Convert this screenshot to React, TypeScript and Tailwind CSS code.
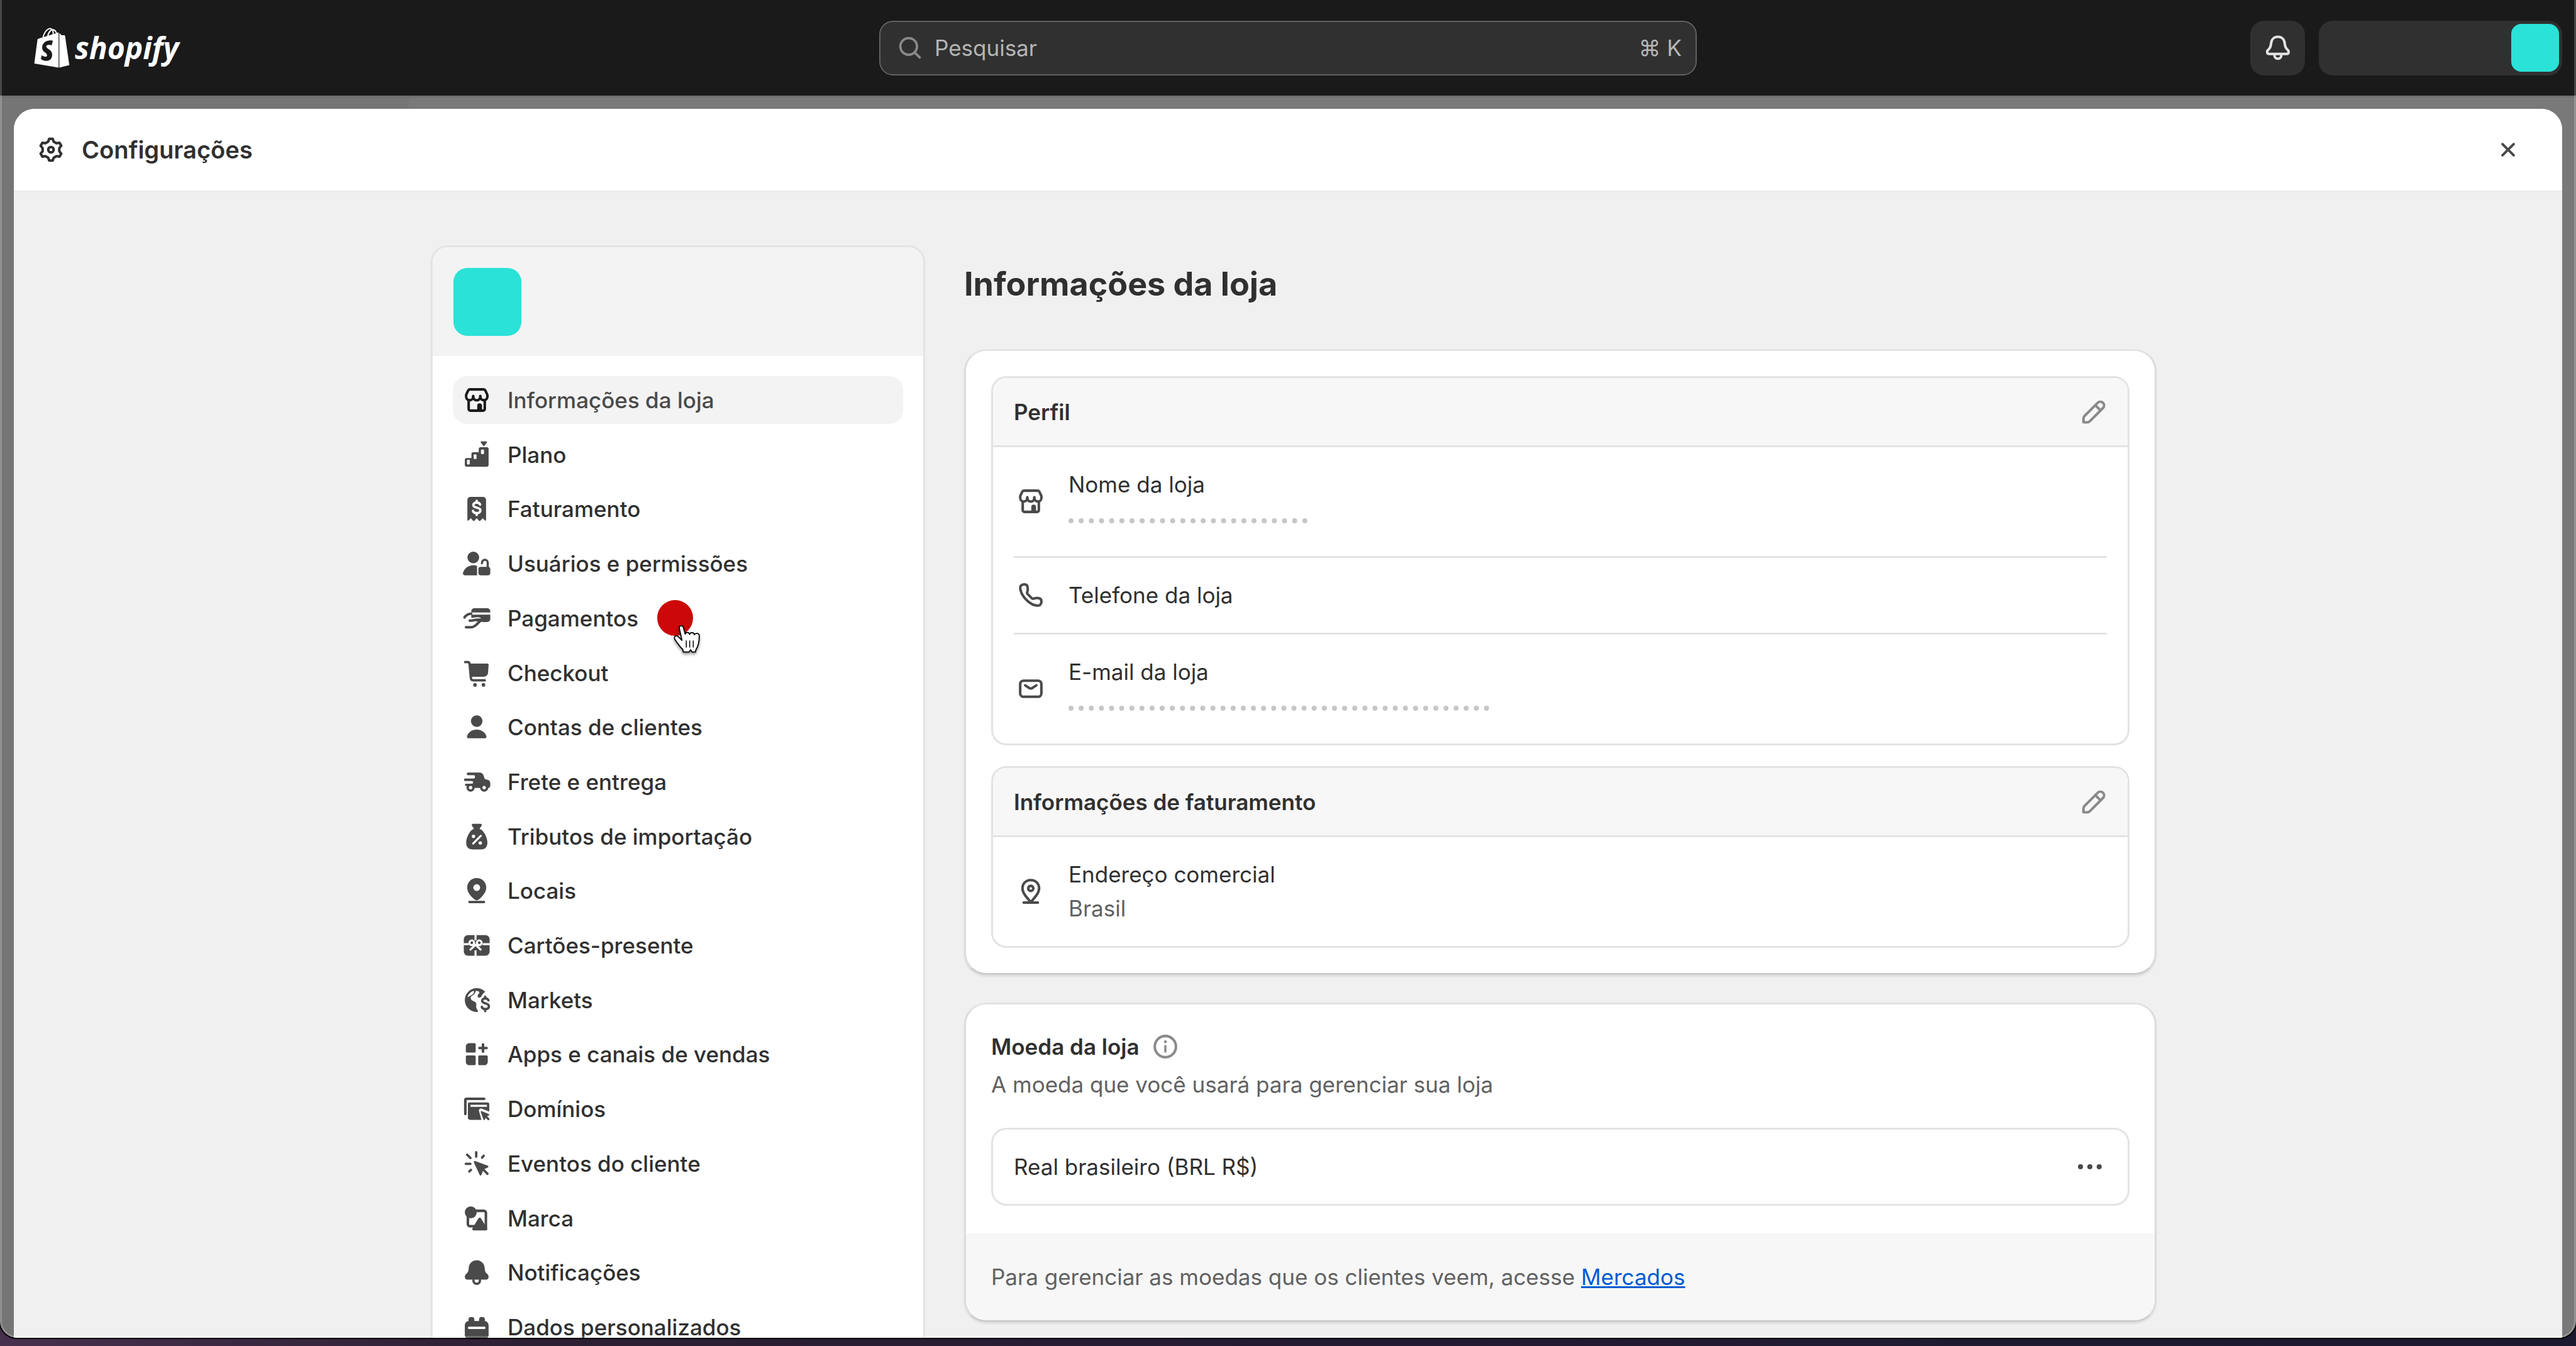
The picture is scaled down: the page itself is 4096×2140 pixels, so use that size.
import type { ReactNode } from "react";
import { FaShopify } from "react-icons/fa";

function Icon({ children, className = "" }: { children: ReactNode; className?: string }) {
  return (
    <svg
      viewBox="0 0 20 20"
      aria-hidden="true"
      fill="none"
      stroke="currentColor"
      strokeWidth="1.5"
      strokeLinecap="round"
      strokeLinejoin="round"
      className={`size-[54px] shrink-0 ${className}`}
    >
      {children}
    </svg>
  );
}

const solid = { fill: "currentColor", stroke: "none" };
const cut = { fill: "#fff", stroke: "none" };

const StoreIcon = () => (
  <Icon>
    <path d="M5.9 3.75h8.2c.4 0 .75.22.93.58l1.1 2.3c.1.2.15.4.15.62v.75a2.08 2.08 0 0 1-4.17.1 2.08 2.08 0 0 1-4.16 0 2.08 2.08 0 0 1-4.17-.1v-.75c0-.22.05-.43.14-.62l1.1-2.3c.18-.36.54-.58.88-.58z" />
    <path d="M7.95 7.6v.6M12.1 7.6v.6" />
    <path d="M5.25 10.4v4.85a1 1 0 0 0 1 1h7.5a1 1 0 0 0 1-1V10.4" />
    <path d="M10.3 16v-2.7a1.4 1.4 0 0 1 2.8 0V16z" fill="currentColor" stroke="none" />
  </Icon>
);

const PlanIcon = () => (
  <Icon>
    <g {...solid}>
      <path d="M12.7 2.1h3a.4.4 0 0 1 .35.6l-1.5 2a.4.4 0 0 1-.7 0l-1.5-2a.4.4 0 0 1 .35-.6z" />
      <path d="M3 12.9c0-.6.5-1 1-1h2.9V9.5c0-.6.5-1 1-1h3.3V6.6c0-.6.5-1 1-1H16c.6 0 1 .4 1 1V16c0 .6-.4 1-1 1H4c-.6 0-1-.4-1-1z" />
    </g>
    <g {...cut}>
      <rect x="4.3" y="13" width="1.6" height="2.7" rx=".4" />
      <rect x="8.2" y="9.8" width="1.7" height="2.7" rx=".4" />
      <rect x="12.5" y="6.9" width="1.8" height="2.7" rx=".4" />
    </g>
  </Icon>
);

const BillIcon = () => (
  <Icon>
    <path
      {...solid}
      d="M4.5 4.8c0-1 .8-1.8 1.8-1.8h7.4c1 0 1.8.8 1.8 1.8v11.7c0 .5-.5.6-.8.3l-1.2-1.3-1.3 1.4c-.3.3-.6.3-.9 0L10 15.5l-1.3 1.4c-.3.3-.6.3-.9 0l-1.3-1.4-1.2 1.3c-.3.3-.8.2-.8-.3z"
    />
    <path
      stroke="#fff"
      strokeWidth="1.4"
      d="M12 7.5c-.2-.8-.9-1.2-2-1.2s-2 .6-2 1.5c0 2.2 4.2.9 4.2 3.1 0 1-.9 1.6-2.2 1.6-1.2 0-2-.5-2.2-1.3M10 5.2v1M10 12.6v1"
    />
  </Icon>
);

const UserLockIcon = () => (
  <Icon>
    <g {...solid}>
      <circle cx="8" cy="6.4" r="3.45" />
      <path d="M1.9 15.6c.8-2.8 3-4.6 6.1-4.6.8 0 1.5.1 2.2.4v5.5H3c-.8 0-1.3-.6-1.1-1.3z" />
      <rect x="11" y="11.9" width="7" height="5" rx="1.3" />
    </g>
    <path strokeWidth="1.3" d="M13.1 9.8v-.3a1.7 1.7 0 0 1 3.4 0V12" />
  </Icon>
);

const PaymentIcon = () => (
  <Icon>
    <g {...solid}>
      <path d="M6.8 6.6v-.7c0-1 .8-1.8 1.8-1.8h7.6c1 0 1.8.8 1.8 1.8v.7z" />
      <path d="M6.8 7.9H18v2.5c0 1-.8 1.8-1.8 1.8h-3.1L11 10.6 7.5 11l-.7-.6z" />
    </g>
    <path d="M2.8 9.5c1.2-1.7 2.4-2.2 3.9-2.2" />
    <path
      d="M6 11.4l3.9-.5c1.6-.2 2.6.5 1.6 1.5-1.7 1.5-2.7 2.9-4.6 2.9H3.7"
      stroke="#fff"
      strokeWidth="3"
    />
    <path d="M5.9 11.4h.8c1.5 0 2-.6 4-.6h2.4c-2 1-3.6 4.5-6.3 4.5H3.7" />
    <path {...solid} d="M8.6 11.2l2.5-.9h3.4v1.5l-3 .6z" />
  </Icon>
);

const CartIcon = () => (
  <Icon>
    <path strokeWidth="1.4" d="M3.2 3.6h1.5c.6 0 1 .4 1.1 1l.8 8.500c.1.800.6 1.200 1.300 1.200h6.900" />
    <path {...solid} d="M5.5 4.45h10.8c.5 0 .8.4.7.9l-.3 4.4c-.1 1.4-1.1 2.45-2.5 2.45H6.2z" />
    <circle {...solid} cx="9" cy="17" r="1.05" />
    <circle {...solid} cx="14" cy="17" r="1.05" />
  </Icon>
);

const PersonIcon = () => (
  <Icon>
    <g {...solid}>
      <circle cx="10" cy="6.5" r="3.4" />
      <path d="M4.3 15.3c.8-2.3 3-3.8 5.7-3.8s4.9 1.5 5.7 3.8c.2.7-.3 1.3-1 1.3H5.3c-.7 0-1.2-.6-1-1.3z" />
    </g>
  </Icon>
);

const TruckIcon = () => (
  <Icon>
    <g {...solid}>
      <path d="M4.9 4.5h6.7c1.2 0 2 .6 2.4 1.7l.8 2.2 1.6.4c1 .3 1.6 1 1.6 2v1.3c0 .9-.5 1.500-1.300 1.500H6.200V12.400H3.700a.65.65 0 0 1 0-1.300h3.500c.9 0 .9-1.600 0-1.600h-4a.7.7 0 0 1 0-1.400h5.100c.9 0 .9-2 0-2H4.900a.8.8 0 0 1 0-1.600z" />
      <circle cx="6.4" cy="13.4" r="2.4" />
      <circle cx="14.4" cy="13.4" r="2.4" />
    </g>
    <circle {...cut} cx="6.4" cy="13.4" r="1" />
    <circle {...cut} cx="14.4" cy="13.4" r="1" />
  </Icon>
);

const TaxIcon = () => (
  <Icon>
    <path
      {...solid}
      d="M7.9 2.5h4.300c.7 0 1 .6.700 1.100L11.600 5.500c2.700.9 4.700 5.200 4.700 8.100 0 2.500-1.400 4-3.700 4H7.500c-2.300 0-3.700-1.500-3.700-4 0-2.900 2-7.200 4.600-8.100L7.200 3.600c-.3-.5 0-1.100.7-1.100z"
    />
    <path stroke="#fff" strokeWidth="1.2" d="M7.9 14.1l4.5-4.5" />
    <circle {...cut} cx="8.1" cy="9.9" r="1" />
    <circle {...cut} cx="12.1" cy="13.8" r="1" />
  </Icon>
);

const PinSolidIcon = () => (
  <Icon>
    <path
      {...solid}
      d="M10 2.6c3.2 0 5.6 2.5 5.6 5.6 0 2.6-2 5-4.3 7-.8.7-1.8.7-2.6 0-2.3-2-4.3-4.4-4.3-7 0-3.1 2.4-5.6 5.6-5.6z"
    />
    <circle {...cut} cx="10" cy="8.2" r="2" />
    <path strokeWidth="1.4" d="M5.7 16.7h8.6" />
  </Icon>
);

const GiftIcon = () => (
  <Icon>
    <rect {...solid} x="2.4" y="4" width="15.2" height="12.1" rx="2.4" />
    <g stroke="#fff" strokeWidth="1.2">
      <path strokeLinecap="butt" d="M9.300 4v3M9.300 13v3.200M2.300 9.300h3M13.500 9.300h4.200" />
      <circle cx="7.1" cy="8.5" r="1.4" />
      <circle cx="11.5" cy="8.5" r="1.4" />
      <path d="M9.3 9.7l-3 2.8M9.3 9.7l3 2.8" />
    </g>
  </Icon>
);

const MarketsIcon = () => (
  <Icon>
    <circle {...solid} cx="10" cy="10" r="7" />
    <path
      {...cut}
      d="M9.7 4.4c-.6.9-.9 2.2-1.9 2.7-1.3.5-1.7 1.5-1 2.6.7 1 2.2.9 2.8 2 .5 1-.2 1.7.2 2.9.4 1.1 1 1.5.9 2.5 4.3 0 7-2.7 7.3-6.7V7.200l-2-2.600c-1.800.9-2.600 1.800-3.200 3.200-.5 1-1.800 1-2.200.3-.3-.7.2-1.500.7-2 .6-.5.500-1.300-1.600-1.700z"
    />
    <path {...cut} d="M4.6 8.3c.4-1.8 1.7-3.2 3.7-3.8.3 1-.2 1.9-1.2 2.4-.9.4-1.5 1.2-2.5 1.4z" />
    <path
      strokeWidth="1.4"
      d="M16.9 10.2c-.2-.8-.9-1.2-1.9-1.2s-1.8.6-1.8 1.4c0 2.1 4 1 4 3.3 0 1-.9 1.6-2.1 1.6-1.2 0-1.9-.5-2.1-1.3M15 8v1M15 15.5v1"
    />
  </Icon>
);

const AppsIcon = () => (
  <Icon>
    <g {...solid}>
      <path d="M5.6 3.5h3c.5 0 .8.3.8.8v4c0 .5-.3.8-.8.8H4.4c-.5 0-.8-.3-.8-.8V5.5c0-1.100.9-2 2-2z" />
      <path d="M4.4 10.7h4.2c.5 0 .8.3.8.8v4.2c0 .5-.3.8-.8.8h-3c-1.1 0-2-.9-2-2v-3c0-.5.3-.8.8-.8z" />
      <path d="M11.7 10.7h4c.5 0 .8.3.8.8v3c0 1.1-.9 2-2 2h-2.800c-.5 0-.8-.3-.8-.8v-4.200c0-.5.300-.8.800-.8z" />
    </g>
    <path d="M13.7 4.3v4.2M11.6 6.4h4.2" />
  </Icon>
);

const DomainsIcon = () => (
  <Icon>
    <path strokeWidth="1.5" d="M3.3 13V4.8c0-.4.3-.7.7-.7h10.4" />
    <path
      {...solid}
      d="M5.8 6.2h10.6c.6 0 1 .4 1 1v4.4l-4.3-1.7c-1.2-.4-2 .4-1.7 1.6l1.4 5H6.200c-.8 0-1.400-.6-1.400-1.400V7.200c0-.6.400-1 1-1z"
    />
    <path stroke="#fff" strokeWidth="1.2" strokeLinecap="butt" d="M6.3 8.2h9.7" />
    <path {...solid} d="M12.9 11.3l4.2 1.8c.4.2.4.7 0 .8l-1 .4 1.2 1.3c.6.7-.3 1.5-.9.9l-1.1-1.2-.5 1.1c-.2.4-.7.3-.8-.1l-1.6-4.4c-.1-.4.1-.7.5-.6z" />
  </Icon>
);

const ClickIcon = () => (
  <Icon>
    <path strokeWidth="1.4" d="M9.7 3.3v2.6M4.4 4.8l1.9 1.9M3.6 10.1h2.7M5.7 14.6l.9-.9M14.1 5.4l-.9 1.1" />
    <path
      {...solid}
      d="M9.2 8.5l7.3 2.7c.6.3.6.9 0 1.1l-1.9.9 2.2 2.3c.7.7-.3 1.7-1 1l-2.1-2.2-.9 2.3c-.3.6-.9.6-1.1 0L8.400 9.400c-.2-.6.200-1.100.8-.9z"
    />
  </Icon>
);

const BrandIcon = () => (
  <Icon>
    <path strokeWidth="1.5" d="M9.5 5.6h4.7c.7 0 1.2.5 1.2 1.2v9M9 14.6H6c-.7 0-1.200-.5-1.200-1.200V9" />
    <circle {...solid} cx="6.5" cy="6.5" r="3.5" />
    <path {...solid} d="M10.9 10.2c.4-.7 1.300-.7 1.700 0l3.500 5.600c.4.600 0 1.300-.7 1.300H8.200c-.7 0-1.100-.7-.7-1.300z" />
  </Icon>
);

const BellSolidIcon = () => (
  <Icon>
    <path
      {...solid}
      d="M10 2.9c2.7 0 4.5 1.9 4.7 4.5.1 1.6.3 2.5 1.5 3.5.5.4.8 1 .8 1.7 0 1.1-.7 1.7-1.7 1.7H4.700c-1 0-1.700-.6-1.700-1.700 0-.7.3-1.300.8-1.700C5 9.900 5.200 9 5.300 7.400 5.500 4.800 7.300 2.900 10 2.900z"
    />
    <path strokeWidth="1.4" d="M8.1 14.6v.2a1.9 1.9 0 0 0 3.8 0v-.2" />
  </Icon>
);

const DataIcon = () => (
  <Icon>
    <path
      {...solid}
      d="M3 9c0-1.4.9-2.4 2.2-2.6V5.3c0-.7.5-1.200 1.200-1.200h1c.7 0 1.200.5 1.200 1.200v1.100h2.800V5.300c0-.7.500-1.200 1.200-1.200h1c.7 0 1.200.5 1.200 1.200v1.100C16.100 6.600 17 7.600 17 9v5.500c0 1.400-1.100 2.500-2.500 2.500h-9C4.100 17 3 15.900 3 14.500z"
    />
    <path stroke="#fff" strokeWidth="1.4" d="M5.5 10.4h9" />
  </Icon>
);

const gearPath = (() => {
  const pts: string[] = [];
  for (let i = 0; i < 6; i++) {
    const mid = -90 + i * 60;
    for (const [offset, r] of [[-19, 5], [-9, 6.5], [9, 6.5], [19, 5]]) {
      const a = ((mid + offset) * Math.PI) / 180;
      pts.push(`${(10 + r * Math.cos(a)).toFixed(2)} ${(10 + r * Math.sin(a)).toFixed(2)}`);
    }
  }
  return `M${pts.join("L")}Z`;
})();

const GearIcon = () => (
  <Icon>
    <path d={gearPath} />
    <circle cx="10" cy="10" r="1.6" />
  </Icon>
);

const BellIcon = () => (
  <Icon className="text-[#e3e3e3]">
    <path d="M10 3.5c2.3 0 3.8 1.6 4 3.8.1 1.7.4 2.8 1.7 3.9.4.3.6.7.6 1.2 0 .8-.5 1.2-1.2 1.2H4.900c-.7 0-1.200-.4-1.200-1.200 0-.5.200-.9.600-1.200C5.600 10.100 5.900 9 6 7.300c.2-2.200 1.700-3.800 4-3.800z" />
    <path d="M8 13.9v.5a2 2 0 0 0 4 0v-.5" />
  </Icon>
);

const PencilIcon = () => (
  <Icon>
    <path d="M4 16v-2.1c0-.6.2-1.1.6-1.5l7.8-7.8a2.19 2.19 0 0 1 3.1 3.1l-7.8 7.8c-.4.4-.9.6-1.5.6z" />
    <path d="M11 6l3.1 3.1" />
  </Icon>
);

const PhoneIcon = () => (
  <Icon>
    <path d="M4.2 4.5c.5-.5 1.1-.8 1.9-.8 1.3 0 2 .8 2.1 2 .1.9.1 1.5-.2 2.2-.3.6-.2 1.1.2 1.6l2.3 2.3c.5.500 1 .5 1.600.2.700-.3 1.300-.3 2.200-.2 1.200.1 2 .8 2 2.100 0 .7-.3 1.400-.8 1.900-.9.800-3.800.6-6.700-1.700-1-.8-1.900-1.700-2.700-2.700-2.300-2.900-2.700-6-1.900-6.900z" />
  </Icon>
);

const MailIcon = () => (
  <Icon>
    <rect x="3.75" y="5.25" width="12.5" height="9.5" rx="2" />
    <path d="M6.7 8l2.5 1.6c.5.3 1.1.3 1.6 0L13.3 8" />
  </Icon>
);

const PinIcon = () => (
  <Icon>
    <path d="M10 3.4c2.8 0 4.9 2.1 4.9 4.8 0 2.6-2 4.9-4.1 7.3-.4.5-1.2.5-1.6 0-2.1-2.4-4.1-4.7-4.1-7.3 0-2.7 2.1-4.8 4.9-4.8z" />
    <circle cx="10" cy="8.3" r="1.5" />
    <path d="M5.8 16.7h8.4" />
  </Icon>
);

function PointerCursor() {
  return (
    <svg
      viewBox="1155 148 145 157"
      aria-hidden="true"
      className="absolute top-[48px] left-[350px] h-[47px] w-[44px] overflow-visible drop-shadow-[0_3px_2px_rgba(0,0,0,0.4)]"
    >
      <path
        d="M1188 168C1184 152 1205 150 1210 164L1219 198C1221 187 1240 187 1243 200C1246 188 1265 188 1268 202C1272 192 1294 192 1294 208C1294 236 1292 258 1277 280L1273 294H1256L1248 282L1239 294H1209L1206 280C1192 268 1180 250 1165 228C1156 212 1170 202 1182 212L1202 232Z"
        fill="#fff"
        stroke="#000"
        strokeWidth="6"
        strokeLinejoin="round"
      />
      <path d="M1225 232V270M1243 232V270M1262 232V270" stroke="#000" strokeWidth="5" />
    </svg>
  );
}

const navItems = [
  { label: "Informações da loja", icon: <StoreIcon />, active: true },
  { label: "Plano", icon: <PlanIcon /> },
  { label: "Faturamento", icon: <BillIcon /> },
  { label: "Usuários e permissões", icon: <UserLockIcon /> },
  { label: "Pagamentos", icon: <PaymentIcon />, pointed: true },
  { label: "Checkout", icon: <CartIcon /> },
  { label: "Contas de clientes", icon: <PersonIcon /> },
  { label: "Frete e entrega", icon: <TruckIcon /> },
  { label: "Tributos de importação", icon: <TaxIcon /> },
  { label: "Locais", icon: <PinSolidIcon /> },
  { label: "Cartões-presente", icon: <GiftIcon /> },
  { label: "Markets", icon: <MarketsIcon /> },
  { label: "Apps e canais de vendas", icon: <AppsIcon /> },
  { label: "Domínios", icon: <DomainsIcon /> },
  { label: "Eventos do cliente", icon: <ClickIcon /> },
  { label: "Marca", icon: <BrandIcon /> },
  { label: "Notificações", icon: <BellSolidIcon /> },
  { label: "Dados personalizados", icon: <DataIcon /> },
];

function TopBar() {
  return (
    <header className="grid h-[152px] shrink-0 grid-cols-[1fr_1300px_1fr] items-center bg-[#1a1a1a] px-[22px]">
      <a href="#inicio" className="flex items-center gap-2 pl-8 text-white" aria-label="Shopify">
        <FaShopify className="h-[66px] w-[57px]" />
        <span className="font-['Open_Sans',sans-serif] text-[48px] leading-[60px] font-bold italic">shopify</span>
      </a>
      <label className="flex h-[87px] items-center rounded-[22px] border-2 border-[#616161] bg-[#303030] pr-[22px] pl-5 text-[#b5b5b5]">
        <Icon className="text-[#8a8a8a]">
          <circle cx="9.2" cy="9.2" r="4.9" strokeWidth="1.4" />
          <path strokeWidth="1.4" d="M12.9 12.9l2.8 2.8" />
        </Icon>
        <input
          type="search"
          aria-label="Pesquisar"
          placeholder="Pesquisar"
          className="ml-3 min-w-0 flex-1 bg-transparent text-[35px] leading-[54px] text-[#b5b5b5] outline-none placeholder:text-[#b5b5b5]"
        />
        <kbd className="font-['Inter',sans-serif] text-[35px] leading-[54px]">⌘ K</kbd>
      </label>
      <div className="flex items-center justify-end gap-[22px]">
        <button type="button" aria-label="Notificações" className="flex size-[87px] items-center justify-center rounded-[22px] bg-[#303030]">
          <BellIcon />
        </button>
        <button type="button" aria-label="Conta" className="flex h-[87px] w-[387px] items-center justify-end rounded-[22px] bg-[#303030] pr-[5px]">
          <span className="size-[76px] rounded-2xl bg-[#2be2d8]" />
        </button>
      </div>
    </header>
  );
}

function Sidebar() {
  return (
    <aside className="w-[786px] shrink-0 self-start overflow-hidden rounded-[27px] border-3 border-[#e3e3e3] bg-white">
      <div className="flex h-[173px] items-center bg-[#f3f3f3] px-[33px]">
        <div className="size-[108px] rounded-[22px] bg-[#2be2d8]" />
      </div>
      <nav className="px-8 py-8">
        <ul className="flex h-[1550px] flex-col justify-between">
          {navItems.map((item) => (
            <li key={item.label} className="relative">
              <a
                href="#config"
                className={
                  item.active
                    ? "flex h-[76px] items-center gap-[22px] rounded-[22px] bg-[#f3f3f3] px-[11px] text-[#1a1a1a]"
                    : "flex h-[76px] items-center gap-[22px] rounded-[22px] px-[11px] text-[#4a4a4a]"
                }
              >
                {item.icon}
                <span className={item.active ? "font-medium text-[#4a4a4a]" : "font-medium text-[#303030]"}>
                  {item.label}
                </span>
              </a>
              {item.pointed && (
                <>
                  <span className="absolute top-[9px] left-[325px] size-[57px] rounded-full bg-[#cc0808]" />
                  <PointerCursor />
                </>
              )}
            </li>
          ))}
        </ul>
      </nav>
    </aside>
  );
}

function Card({ children }: { children: ReactNode }) {
  return (
    <section className="overflow-hidden rounded-[35px] border-3 border-x-[#dcdcdc] border-t-[#e3e3e3] border-b-[#cccccc] bg-white shadow-[0_3px_3px_rgba(0,0,0,0.07)]">
      {children}
    </section>
  );
}

function Box({ title, children }: { title: string; children: ReactNode }) {
  return (
    <div className="overflow-hidden rounded-[24px] border-3 border-[#e3e3e3]">
      <div className="flex h-[110px] items-center justify-between border-b-3 border-[#e3e3e3] bg-[#f7f7f7] px-[33px]">
        <h2 className="font-semibold">{title}</h2>
        <button type="button" aria-label={`Editar ${title}`} className="-mr-1.5 text-[#8a8a8a]">
          <PencilIcon />
        </button>
      </div>
      <div className="divide-y-3 divide-[#e3e3e3] px-[33px]">{children}</div>
    </div>
  );
}

function Row({ icon, label, children }: { icon: ReactNode; label: string; children?: ReactNode }) {
  return (
    <div className="flex items-center gap-[33px] pt-8 pb-[33px]">
      <span className="text-[#4a4a4a]">{icon}</span>
      <div className="flex-1">
        <p>{label}</p>
        {children}
      </div>
    </div>
  );
}

function StoreDetails() {
  return (
    <main className="w-[1896px] shrink-0">
      <h1 className="pt-8 pb-[73px] text-[52px] leading-[60px] font-bold">Informações da loja</h1>
      <div className="flex flex-col gap-[44px]">
        <Card>
          <div className="flex flex-col gap-[33px] p-10">
            <Box title="Perfil">
              <Row icon={<StoreIcon />} label="Nome da loja">
                <div className="h-[54px] pt-[27px]">
                  <div className="w-[380px] border-t-8 border-dotted border-[#c6c6c6]" />
                </div>
              </Row>
              <Row icon={<PhoneIcon />} label="Telefone da loja" />
              <Row icon={<MailIcon />} label="E-mail da loja">
                <div className="h-[54px] pt-[27px]">
                  <div className="w-[669px] border-t-8 border-dotted border-[#c6c6c6]" />
                </div>
              </Row>
            </Box>
            <Box title="Informações de faturamento">
              <Row icon={<PinIcon />} label="Endereço comercial">
                <p className="text-[#616161]">Brasil</p>
              </Row>
            </Box>
          </div>
        </Card>
        <Card>
          <div className="px-10 pt-10 pb-[44px]">
            <div className="flex items-center gap-3.5">
              <h2 className="font-semibold">Moeda da loja</h2>
              <button type="button" aria-label="Sobre a moeda da loja" className="text-[#8a8a8a]">
                <Icon>
                  <circle cx="10" cy="10" r="6.25" />
                  <path strokeWidth="1.3" d="M10 9.6v3.4" />
                  <circle {...solid} cx="10" cy="7.1" r=".85" />
                </Icon>
              </button>
            </div>
            <p className="mt-1.5 text-[#616161]">A moeda que você usará para gerenciar sua loja</p>
            <div className="mt-[42px] flex h-[124px] items-center justify-between rounded-[24px] border-3 border-[#e3e3e3] px-[33px]">
              <p>Real brasileiro (BRL R$)</p>
              <button type="button" aria-label="Mais ações" className="text-[#4a4a4a]">
                <Icon>
                  <g {...solid}>
                    <circle cx="4.5" cy="10" r="1.5" />
                    <circle cx="10" cy="10" r="1.5" />
                    <circle cx="15.5" cy="10" r="1.5" />
                  </g>
                </Icon>
              </button>
            </div>
          </div>
          <p className="bg-[#f7f7f7] px-10 py-[42px] text-[#616161]">
            Para gerenciar as moedas que os clientes veem, acesse{" "}
            <a href="#mercados" className="text-[#005bd3] underline">
              Mercados
            </a>
          </p>
        </Card>
      </div>
    </main>
  );
}

export default function App() {
  return (
    <div className="h-screen w-full overflow-hidden bg-[linear-gradient(to_right,#46304e,#2d1f33_20%,#241b33_50%,#1b1930)] pb-[13px] font-['Inter',sans-serif] text-[35px] leading-[54px] text-[#303030]">
      <div className="relative flex h-full flex-col overflow-hidden rounded-b-[27px] bg-[linear-gradient(to_right,#757575_650px,#797979_650px)] shadow-[0_0_0_2px_#000]">
        <TopBar />
        <div className="flex min-h-0 flex-1 flex-col border-t-3 border-[#6f6f6f] px-[22px] pt-[18px]">
          <div className="flex min-h-0 flex-1 flex-col overflow-hidden rounded-t-[33px] bg-[#f0f0f0]">
            <div className="flex h-[133px] shrink-0 items-center justify-between border-b-3 border-[#ebebeb] bg-white px-8">
              <div className="flex items-center gap-[22px]">
                <GearIcon />
                <p className="text-[38px] font-semibold">Configurações</p>
              </div>
              <button type="button" aria-label="Fechar" className="mr-[27px] text-[#4a4a4a]">
                <Icon>
                  <path d="M6.7 6.7l6.6 6.6M13.3 6.7l-6.6 6.6" />
                </Icon>
              </button>
            </div>
            <div className="flex min-h-0 flex-1 justify-center gap-[62px] overflow-hidden pt-[84px] pl-[18px]">
              <Sidebar />
              <StoreDetails />
            </div>
          </div>
        </div>
        <div className="pointer-events-none absolute inset-0 rounded-b-[27px] border-x-3 border-b-3 border-white/20" />
      </div>
    </div>
  );
}
